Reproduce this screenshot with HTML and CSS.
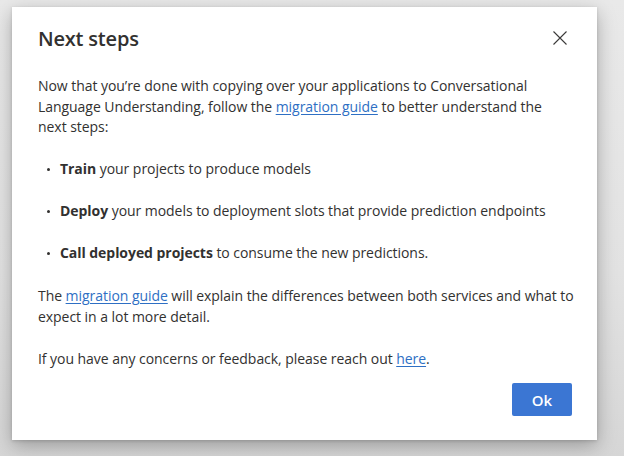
FILE: index.html
```html
<!DOCTYPE html>
<html lang="en">
<head>
<meta charset="utf-8">
<title>Next steps</title>
<link rel="stylesheet" href="styles.css">
</head>
<body>
<div class="dialog" role="dialog" aria-labelledby="dlg-title">
  <div class="dialog-header">
    <h2 class="dialog-title" id="dlg-title">Next steps</h2>
    <button class="close-btn" aria-label="Close">
      <svg width="16" height="16" viewBox="0 0 16 16" aria-hidden="true"><path d="M1.5 1.5 L14.5 14.5 M14.5 1.5 L1.5 14.5" stroke="#3b3a39" stroke-width="1.1" fill="none"/></svg>
    </button>
  </div>
  <div class="dialog-body">
    <p class="intro">Now that you’re done with copying over your applications to Conversational Language Understanding, follow the <a href="#">migration guide</a> to better understand the next steps:</p>
    <ul class="steps">
      <li><b>Train</b> your projects to produce models</li>
      <li><b>Deploy</b> your models to deployment slots that provide prediction endpoints</li>
      <li><b>Call deployed projects</b> to consume the new predictions.</li>
    </ul>
    <p>The <a href="#">migration guide</a> will explain the differences between both services and what to expect in a lot more detail.</p>
    <p>If you have any concerns or feedback, please reach out <a href="#">here</a>.</p>
  </div>
  <div class="dialog-footer">
    <button class="ok-btn">Ok</button>
  </div>
</div>
</body>
</html>
```
FILE: styles.css
```css
html, body {
  margin: 0;
  padding: 0;
}
body {
  width: 624px;
  height: 456px;
  overflow: hidden;
  background: linear-gradient(180deg, #e9e9e9 0%, #e2e2e2 60%, #d6d6d6 100%);
  font-family: "Open Sans", "Noto Sans", sans-serif;
  color: #323130;
}
.dialog {
  margin: 7px 0 0 12px;
  width: 585px;
  height: 433px;
  box-sizing: border-box;
  background: #ffffff;
  box-shadow: 0 6px 18px rgba(0, 0, 0, 0.28), 0 1px 3px rgba(0, 0, 0, 0.15);
  padding: 0 16px 0 26px;
  display: flex;
  flex-direction: column;
}
.dialog-header {
  display: flex;
  align-items: center;
  justify-content: space-between;
  padding-top: 18px;
  height: 28px;
}
.dialog-title {
  margin: 0;
  font-size: 20px;
  font-weight: 600;
  line-height: 28px;
  color: #323130;
  letter-spacing: -0.2px;
}
.close-btn {
  border: 0;
  background: none;
  padding: 0;
  width: 16px;
  height: 16px;
  margin-right: 13px;
  margin-top: -3px;
  display: flex;
}
.dialog-body {
  margin-top: 23px;
  font-size: 14px;
  line-height: 20.5px;
  letter-spacing: -0.05px;
}
.dialog-body p {
  margin: 0 0 21.5px;
}
.dialog-body p:last-child {
  margin-bottom: 0;
}
.dialog-body .intro {
  max-width: 515px;
}
.dialog-body a {
  color: #2e6fc4;
  text-decoration: underline;
  text-underline-offset: 2px;
}
.dialog-body b {
  font-weight: 700;
}
.steps {
  margin: 0 0 22.5px;
  padding: 0 0 0 22px;
  list-style: none;
}
.steps li {
  margin-bottom: 21.5px;
  position: relative;
}
.steps li:last-child {
  margin-bottom: 0;
}
.steps li::before {
  content: "";
  position: absolute;
  left: -13px;
  top: 9px;
  width: 3px;
  height: 3px;
  border-radius: 50%;
  background: #323130;
}
.dialog-footer {
  display: flex;
  justify-content: flex-end;
  margin-top: 14px;
  padding-right: 9px;
}
.ok-btn {
  width: 60px;
  height: 33px;
  border: 0;
  border-radius: 2px;
  background: #3b76d3;
  color: #ffffff;
  font-family: "Open Sans", "Noto Sans", sans-serif;
  font-size: 15px;
  font-weight: 600;
}
```
